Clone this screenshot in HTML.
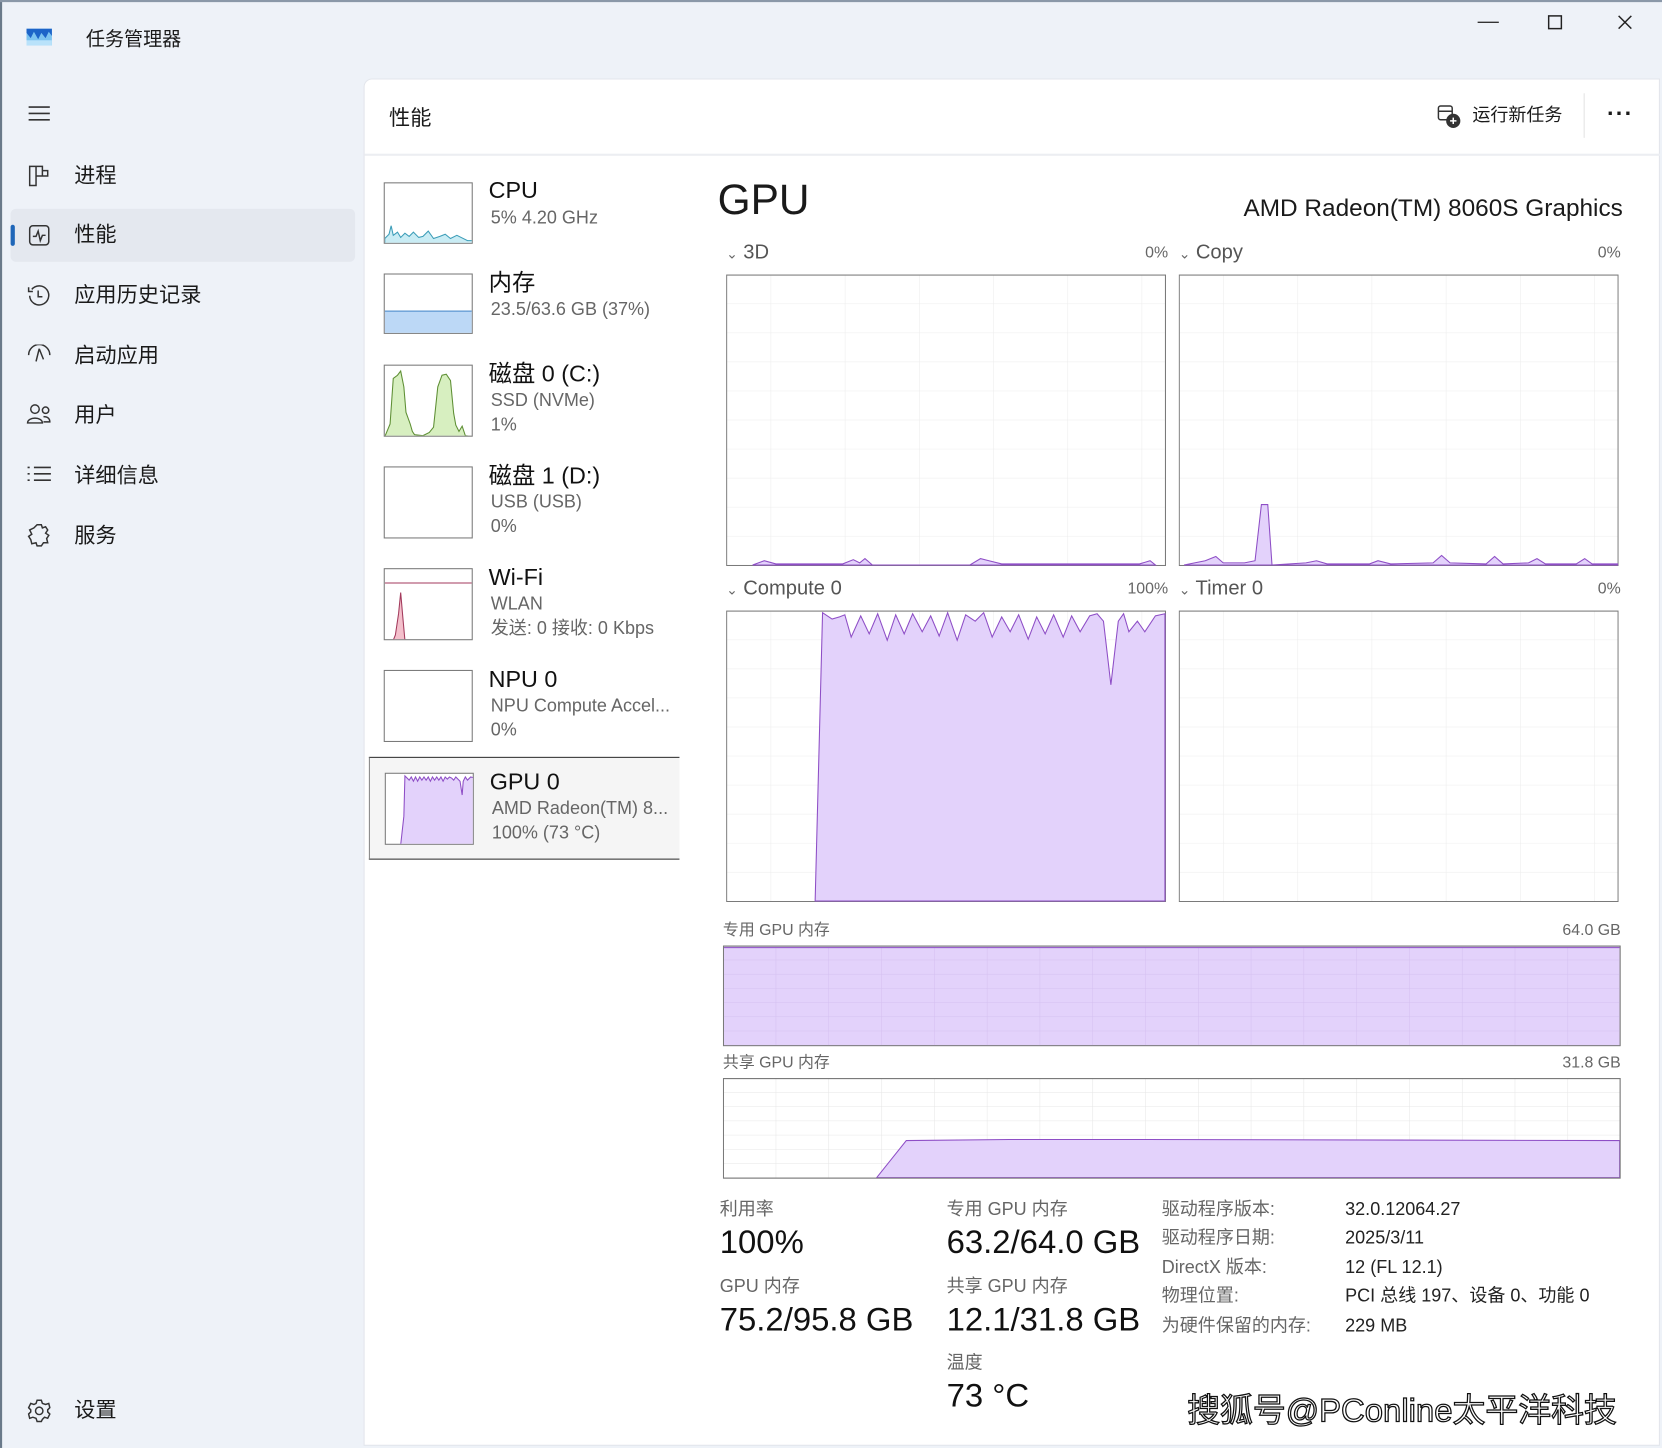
<!DOCTYPE html>
<html><head><meta charset="utf-8">
<style>
html,body{margin:0;padding:0;width:1662px;height:1448px;overflow:hidden;background:#eef2f8;}
#w{position:absolute;left:0;top:0;width:1568px;height:1366px;transform:scale(1.06);transform-origin:0 0;font-family:"Liberation Sans","Noto Sans CJK SC",sans-serif;color:#1a1a1a;background:#eef2f8;}
.a{position:absolute;white-space:nowrap;line-height:1;}
.nav{font-size:20px;}
.ico{position:absolute;}
.t{font-size:22px;color:#111;}
.s{font-size:17px;color:#666;}
.th{position:absolute;width:84px;background:#fff;border:1px solid #7a7a7a;box-sizing:border-box;overflow:hidden;}
.lbl{font-size:19px;color:#555;}
.pc{font-size:15px;color:#666;}
.sl{font-size:17px;color:#666;}
.sv{font-size:31px;color:#111;}
</style></head><body><div id="w">
<div style="position:absolute;left:0;top:0;width:2px;height:1366px;background:#6a7a8a"></div>
<div style="position:absolute;left:0;top:0;width:1568px;height:2px;background:#8a98a8"></div>
<svg class="ico" style="left:25px;top:27px" width="24" height="16"><rect width="24" height="16" fill="#7cc3f0"/><path d="M0 4 L4 9 L7 3 L11 10 L14 4 L18 9 L21 3 L24 7 L24 0 L0 0Z" fill="#1c64c8"/><rect y="11" width="24" height="5" fill="#b9e2fa"/></svg>
<div class="a" style="left:81px;top:28px;font-size:18px">任务管理器</div>
<div class="a" style="left:1394px;top:10px;font-size:20px;color:#333">—</div>
<svg class="ico" style="left:1460px;top:14px" width="14" height="14"><rect x="1" y="1" width="12" height="12" fill="none" stroke="#222" stroke-width="1.4"/></svg>
<svg class="ico" style="left:1526px;top:14px" width="14" height="14"><path d="M1 1L13 13M13 1L1 13" stroke="#222" stroke-width="1.4"/></svg>
<svg class="ico" style="left:26px;top:99px" width="22" height="16"><path d="M1 2H21M1 8H21M1 14H21" stroke="#333" stroke-width="1.5"/></svg>
<div style="position:absolute;left:10px;top:197px;width:325px;height:50px;background:#e4e8ef;border-radius:5px"></div>
<div style="position:absolute;left:10px;top:212px;width:4px;height:20px;background:#1f66b8;border-radius:2px"></div>
<svg class="ico" style="left:26px;top:155px" width="22" height="22" fill="none" stroke="#333" stroke-width="1.4"><path d="M2 2H14V11H8V20H2Z M8 2V11 M14 6H19V11H14"/></svg>
<div class="a nav" style="left:70px;top:156px">进程</div>
<svg class="ico" style="left:26px;top:211px" width="22" height="22" fill="none" stroke="#333" stroke-width="1.4"><rect x="2" y="2" width="18" height="18" rx="3"/><path d="M5 12H8L10 7L12 16L14 11H17"/></svg>
<div class="a nav" style="left:70px;top:212px">性能</div>
<svg class="ico" style="left:25px;top:267px" width="24" height="24" fill="none" stroke="#333" stroke-width="1.4"><path d="M5 6A9 9 0 1 1 3 12"/><path d="M2 4V8H6"/><path d="M11 7V13H15"/></svg>
<div class="a nav" style="left:70px;top:269px">应用历史记录</div>
<svg class="ico" style="left:25px;top:325px" width="24" height="20" fill="none" stroke="#333" stroke-width="1.4"><path d="M2 10A10 10 0 0 1 22 10"/><path d="M12 4L9 16M12 4L16 14"/></svg>
<div class="a nav" style="left:70px;top:326px">启动应用</div>
<svg class="ico" style="left:25px;top:380px" width="24" height="22" fill="none" stroke="#333" stroke-width="1.4"><circle cx="8" cy="6" r="4"/><circle cx="18" cy="7" r="3"/><path d="M1 19C1 13 15 13 15 19Z"/><path d="M16 13C20 13 22 15 22 18H16"/></svg>
<div class="a nav" style="left:70px;top:382px">用户</div>
<svg class="ico" style="left:25px;top:439px" width="24" height="18" stroke="#333" stroke-width="1.5"><path d="M1 2H3M1 8H3M1 14H3M7 2H23M7 8H23M7 14H23"/></svg>
<div class="a nav" style="left:70px;top:439px">详细信息</div>
<svg class="ico" style="left:25px;top:493px" width="24" height="24" fill="none" stroke="#333" stroke-width="1.4"><path d="M10 2H14L15 5L18 4L20 7L18 10L21 12L19 15L20 19L16 19L14 22L10 22L9 19L5 20L4 16L2 13L5 11L3 7L7 5Z"/></svg>
<div class="a nav" style="left:70px;top:496px">服务</div>
<svg class="ico" style="left:26px;top:1320px" width="22" height="22" fill="none" stroke="#333" stroke-width="1.4"><circle cx="11" cy="11" r="3.5"/><path d="M9 1H13L14 4L17 5L20 4L21 8L19 10V12L21 14L19 18L16 17L14 19L13 21H9L8 18L5 17L2 18L1 14L3 12V10L1 8L3 4L6 5L8 4Z"/></svg>
<div class="a nav" style="left:70px;top:1321px">设置</div>
<div style="position:absolute;left:343px;top:74px;width:1223px;height:1290px;background:#fff;border-top-left-radius:8px;border:1px solid #e3e6ec;box-sizing:border-box"></div>
<div style="position:absolute;left:344px;top:145px;width:1222px;height:2px;background:#eceef2"></div>
<div class="a" style="left:367px;top:102px;font-size:20px">性能</div>
<svg class="ico" style="left:1355px;top:98px" width="24" height="24" fill="none" stroke="#333" stroke-width="1.4"><rect x="2" y="2" width="13" height="13" rx="2"/><path d="M2 7H15"/><circle cx="16" cy="16" r="6" fill="#333"/><path d="M16 13V19M13 16H19" stroke="#fff"/></svg>
<div class="a" style="left:1389px;top:100px;font-size:17px">运行新任务</div>
<div style="position:absolute;left:1494px;top:88px;width:1px;height:42px;background:#e3e3e3"></div>
<div class="a" style="left:1516px;top:96px;font-size:22px;letter-spacing:1px;font-weight:bold">···</div>
<div class="th" style="left:362px;top:172px;height:58px"><svg width="84" height="58" style="position:absolute;left:0;top:0"><path d="M0 52L4 48L6 40L8 49L12 46L15 51L19 47L23 50L27 46L32 51L36 50L41 45L46 52L52 50L57 48L62 52L68 49L72 51L78 54L84 54V58H0Z" fill="#c9ecf4" stroke="#3c9db8" stroke-width="1"/></svg></div>
<div class="a t" style="left:461px;top:169px">CPU</div><div class="a s" style="left:463px;top:197px">5% 4.20 GHz</div>
<div class="th" style="left:362px;top:258px;height:57px"><div style="position:absolute;left:0;top:34px;width:84px;height:23px;background:#bcd8f6;border-top:1px solid #4a8acb"></div></div>
<div class="a t" style="left:461px;top:256px">内存</div><div class="a s" style="left:463px;top:283px">23.5/63.6 GB (37%)</div>
<div class="th" style="left:362px;top:344px;height:68px"><svg width="84" height="68" style="position:absolute;left:0;top:0"><path d="M0 67L5 55L8 12L12 9L15 5L18 20L20 44L24 55L26 62L28 65L36 66L42 63L46 58L50 20L54 9L58 8L62 14L65 45L67 56L70 62L73 57L76 66L84 67Z" fill="#d7efc0" stroke="#5e8f34" stroke-width="1"/></svg></div>
<div class="a t" style="left:461px;top:342px">磁盘 0 (C:)</div><div class="a s" style="left:463px;top:369px">SSD (NVMe)</div><div class="a s" style="left:463px;top:392px">1%</div>
<div class="th" style="left:362px;top:440px;height:68px"></div>
<div class="a t" style="left:461px;top:438px">磁盘 1 (D:)</div><div class="a s" style="left:463px;top:465px">USB (USB)</div><div class="a s" style="left:463px;top:488px">0%</div>
<div class="th" style="left:362px;top:536px;height:68px"><svg width="84" height="68" style="position:absolute;left:0;top:0"><path d="M0 13H84" stroke="#a33a5c" stroke-width="1"/><path d="M8 67L10 62L13 42L15 22L17 45L19 67Z" fill="#f4c0cc" stroke="#a33a5c"/></svg></div>
<div class="a t" style="left:461px;top:534px">Wi-Fi</div><div class="a s" style="left:463px;top:561px">WLAN</div><div class="a s" style="left:463px;top:584px">发送: 0 接收: 0 Kbps</div>
<div class="th" style="left:362px;top:632px;height:68px"></div>
<div class="a t" style="left:461px;top:630px">NPU 0</div><div class="a s" style="left:463px;top:657px">NPU Compute Accel...</div><div class="a s" style="left:463px;top:680px">0%</div>
<div style="position:absolute;left:348px;top:714px;width:293px;height:97px;background:#f5f5f5;border-top:1px solid #333;border-bottom:1px solid #333;border-left:1px solid #888;box-sizing:border-box"></div>
<div class="th" style="left:363px;top:729px;height:68px"><svg width="84" height="68" style="position:absolute;left:0;top:0"><path d="M14 67L17 40L18 2L22 6L24 3L26 7L28 3L30 7L32 3L34 6L36 3L38 6L40 3L42 7L44 3L46 6L48 3L50 6L52 3L54 7L56 3L58 5L60 3L62 4L64 6L66 3L68 5L70 7L72 20L73 7L75 3L77 6L80 3L84 4V68H14Z" fill="#e3d2fb" stroke="#8e4ec6" stroke-width="1"/></svg></div>
<div class="a t" style="left:462px;top:727px">GPU 0</div><div class="a s" style="left:464px;top:754px">AMD Radeon(TM) 8...</div><div class="a s" style="left:464px;top:777px">100% (73 °C)</div>
<div class="a" style="left:677px;top:169px;font-size:40px">GPU</div>
<div class="a" style="left:1130px;top:185px;width:401px;text-align:right;font-size:23px">AMD Radeon(TM) 8060S Graphics</div>
<svg width="0" height="0" style="position:absolute"><defs>
<pattern id="g" x="42" y="0" width="70" height="27.4" patternUnits="userSpaceOnUse"><path d="M0 0V27.4M0 0H70" stroke="#ececec" stroke-width="1" fill="none"/></pattern>
<pattern id="g2" x="0" y="0" width="49.8" height="13.4" patternUnits="userSpaceOnUse"><path d="M0 0V13.4M0 0H49.8" stroke="#e6e6e6" stroke-width="1" fill="none"/></pattern>
<pattern id="g3" x="0" y="0" width="49.8" height="13.4" patternUnits="userSpaceOnUse"><path d="M0 0V13.4M0 0H49.8" stroke="#d4c0f0" stroke-width="1" fill="none"/></pattern>
</defs></svg>
<div class="a lbl" style="left:685px;top:229px"><span style="font-size:13px;color:#666">⌄</span> 3D</div><div class="a pc" style="left:1040px;top:231px;width:62px;text-align:right">0%</div>
<div class="a lbl" style="left:1112px;top:229px"><span style="font-size:13px;color:#666">⌄</span> Copy</div><div class="a pc" style="left:1467px;top:231px;width:62px;text-align:right">0%</div>
<div class="a lbl" style="left:685px;top:546px"><span style="font-size:13px;color:#666">⌄</span> Compute 0</div><div class="a pc" style="left:1040px;top:548px;width:62px;text-align:right">100%</div>
<div class="a lbl" style="left:1112px;top:546px"><span style="font-size:13px;color:#666">⌄</span> Timer 0</div><div class="a pc" style="left:1467px;top:548px;width:62px;text-align:right">0%</div>
<svg class="ico" style="left:685px;top:259px" width="415" height="275"><rect x="0.5" y="0.5" width="414" height="274" fill="url(#g)" stroke="#7a7a7a"/><path d="M25 274L36 270L47 273L110 273L120 269L126 272L131 268L138 274L230 274L240 268L248 270L260 273L390 273L400 270L405 274Z" fill="#e3d2fb" stroke="#8e4ec6"/></svg>
<svg class="ico" style="left:1112px;top:259px" width="415" height="275"><rect x="0.5" y="0.5" width="414" height="274" fill="url(#g)" stroke="#7a7a7a"/><path d="M5 274L15 272L25 270L35 266L42 272L55 272L62 272L72 270L78 217L84 217L88 274L120 272L130 270L140 273L180 273L188 270L200 273L240 272L248 265L256 272L290 273L298 266L306 273L330 272L338 268L346 273L375 273L383 268L390 273L414 273V274Z" fill="#e3d2fb" stroke="#8e4ec6"/></svg>
<svg class="ico" style="left:685px;top:576px" width="415" height="275"><rect x="0.5" y="0.5" width="414" height="274" fill="url(#g)" stroke="#7a7a7a"/><path d="M84 274L91 2L100 8L107 6L112 4L118 25L127 5L135 22L143 3L152 28L160 4L168 22L176 3L185 20L193 5L201 24L209 2L218 28L226 4L235 10L243 2L251 25L260 6L268 20L276 4L285 27L293 6L301 22L309 4L318 25L326 5L334 20L343 5L350 3L356 10L363 70L370 10L375 3L380 20L388 10L395 20L405 5L414 3V274Z" fill="#e3d2fb" stroke="#8e4ec6"/></svg>
<svg class="ico" style="left:1112px;top:576px" width="415" height="275"><rect x="0.5" y="0.5" width="414" height="274" fill="url(#g)" stroke="#7a7a7a"/></svg>
<div class="a pc" style="left:682px;top:870px">专用 GPU 内存</div><div class="a pc" style="left:1430px;top:870px;width:99px;text-align:right">64.0 GB</div>
<svg class="ico" style="left:682px;top:892px" width="847" height="95"><rect x="0.5" y="0.5" width="846" height="94" fill="#e3d2fb" stroke="#7a7a7a"/><rect x="0.5" y="0.5" width="846" height="94" fill="url(#g3)"/><path d="M1 2H846" stroke="#8e4ec6"/><rect x="0.5" y="0.5" width="846" height="94" fill="none" stroke="#7a7a7a"/></svg>
<div class="a pc" style="left:682px;top:995px">共享 GPU 内存</div><div class="a pc" style="left:1430px;top:995px;width:99px;text-align:right">31.8 GB</div>
<svg class="ico" style="left:682px;top:1017px" width="847" height="95"><rect x="0.5" y="0.5" width="846" height="94" fill="url(#g2)" stroke="#7a7a7a"/><path d="M145 94L173 59L270 58L400 58L846 59V94Z" fill="#e3d2fb" stroke="#8e4ec6"/><rect x="0.5" y="0.5" width="846" height="94" fill="none" stroke="#7a7a7a"/></svg>
<div class="a sl" style="left:679px;top:1132px">利用率</div><div class="a sv" style="left:679px;top:1156px">100%</div>
<div class="a sl" style="left:679px;top:1205px">GPU 内存</div><div class="a sv" style="left:679px;top:1229px">75.2/95.8 GB</div>
<div class="a sl" style="left:893px;top:1132px">专用 GPU 内存</div><div class="a sv" style="left:893px;top:1156px">63.2/64.0 GB</div>
<div class="a sl" style="left:893px;top:1205px">共享 GPU 内存</div><div class="a sv" style="left:893px;top:1229px">12.1/31.8 GB</div>
<div class="a sl" style="left:893px;top:1277px">温度</div><div class="a sv" style="left:893px;top:1301px">73 °C</div>
<div class="a sl" style="left:1096px;top:1132px">驱动程序版本:</div><div class="a sl" style="left:1269px;top:1132px;color:#222">32.0.12064.27</div>
<div class="a sl" style="left:1096px;top:1159px">驱动程序日期:</div><div class="a sl" style="left:1269px;top:1159px;color:#222">2025/3/11</div>
<div class="a sl" style="left:1096px;top:1187px">DirectX 版本:</div><div class="a sl" style="left:1269px;top:1187px;color:#222">12 (FL 12.1)</div>
<div class="a sl" style="left:1096px;top:1214px">物理位置:</div><div class="a sl" style="left:1269px;top:1214px;color:#222">PCI 总线 197、设备 0、功能 0</div>
<div class="a sl" style="left:1096px;top:1242px">为硬件保留的内存:</div><div class="a sl" style="left:1269px;top:1242px;color:#222">229 MB</div>
<div class="a" style="left:1120px;top:1315px;font-size:31px;color:#fff;-webkit-text-stroke:1.2px #111;letter-spacing:0">搜狐号@PConline太平洋科技</div>
</div></body></html>
